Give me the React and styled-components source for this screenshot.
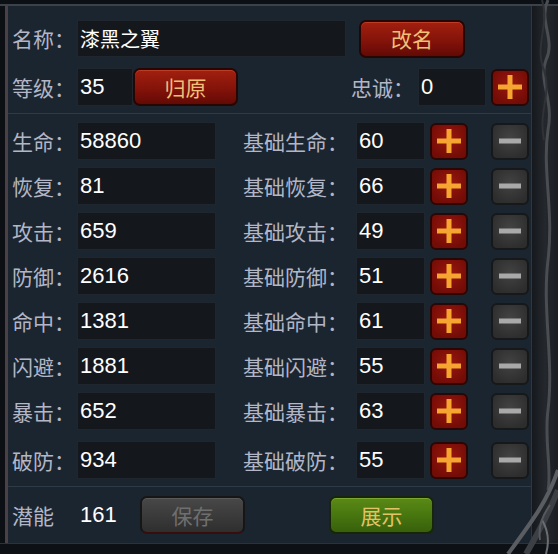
import React from 'react';
import styled, { createGlobalStyle } from 'styled-components';

const GlobalStyle = createGlobalStyle`
  html, body {
    margin: 0;
    padding: 0;
    background: #0f1419;
  }
  body {
    width: 558px;
    height: 554px;
    overflow: hidden;
  }
`;

const Frame = styled.div`
  position: relative;
  width: 558px;
  height: 554px;
  display: flex;
  flex-direction: column;
  background: #0f1419;
  font-family: "Noto Sans CJK SC", "Liberation Sans", sans-serif;
  overflow: hidden;
`;

const TopEdge = styled.div`
  height: 6px;
  box-sizing: border-box;
  background: #0c1014;
  border-bottom: 2px solid #3b424a;
`;

const Middle = styled.div`
  flex: 1;
  display: flex;
`;

const LeftEdge = styled.div`
  width: 8px;
  box-sizing: border-box;
  background: #0c1014;
  border-right: 3px solid #4a4046;
`;

const Panel = styled.div`
  flex: 1;
  display: flex;
  flex-direction: column;
  padding: 14px 0 8px 4px;
  background: #1b2530;
  border-right: 1px solid #2c3743;
`;

const RightEdge = styled.div`
  width: 26px;
  background: linear-gradient(90deg, #15191d, #24272b 50%, #1a1d21);
`;

const BottomEdge = styled.div`
  height: 11px;
  box-sizing: border-box;
  background: #0d1115;
  border-top: 1px solid #2a323b;
`;

const Row = styled.div`
  display: flex;
  align-items: center;
  height: ${(p) => p.$h || 38}px;
  margin-top: ${(p) => p.$mt || 0}px;
  margin-bottom: ${(p) => p.$mb || 0}px;
`;

const Label = styled.div`
  width: ${(p) => p.$w || 65}px;
  margin-left: ${(p) => p.$ml || 0}px;
  flex-shrink: 0;
  color: #b2b6c6;
  font-size: 21px;
  line-height: 1;
  white-space: nowrap;
`;

const ValueBox = styled.div`
  width: ${(p) => p.$w}px;
  height: 100%;
  flex-shrink: 0;
  box-sizing: border-box;
  display: flex;
  align-items: center;
  padding-left: 2px;
  background: #14181d;
  border: 1px solid #1f262e;
  color: #ffffff;
  font-family: ${(p) => (p.$cjk ? '"Noto Sans CJK SC", sans-serif' : '"Liberation Sans", Arial, sans-serif')};
  font-size: ${(p) => (p.$cjk ? 20 : 22)}px;
`;

const PlainValue = styled.div`
  width: ${(p) => p.$w}px;
  flex-shrink: 0;
  color: #ffffff;
  font-family: "Liberation Sans", Arial, sans-serif;
  font-size: 22px;
`;

const TextButton = styled.button`
  width: ${(p) => p.$w}px;
  height: 38px;
  margin-left: ${(p) => p.$ml || 0}px;
  flex-shrink: 0;
  box-sizing: border-box;
  padding: 0;
  border-radius: 7px;
  font-family: "Noto Sans CJK SC", sans-serif;
  font-size: 21px;
  line-height: 1;
  cursor: pointer;
  ${(p) =>
    p.$tone === 'green'
      ? `
    background: linear-gradient(180deg, #5a8a16 0%, #46740f 55%, #38600b 100%);
    border: 2px solid #17260a;
    color: #e4c266;
    box-shadow: inset 0 1px 0 rgba(200, 240, 120, 0.3);
  `
      : p.$tone === 'gray'
      ? `
    background: linear-gradient(180deg, #484848 0%, #3a3a3a 55%, #2e2e2e 100%);
    border: 2px solid #161616;
    border-bottom-color: #3a0d0d;
    color: #6f6f6f;
    box-shadow: inset 0 1px 0 rgba(255, 255, 255, 0.1);
  `
      : `
    background: linear-gradient(180deg, #a2200f 0%, #84130a 55%, #620a05 100%);
    border: 2px solid #250603;
    color: #f0c078;
    box-shadow: inset 0 1px 0 rgba(255, 130, 100, 0.3);
  `}
`;

const IconButton = styled.button`
  width: 38px;
  height: 37px;
  margin-left: ${(p) => p.$ml || 0}px;
  flex-shrink: 0;
  box-sizing: border-box;
  padding: 0;
  display: flex;
  align-items: center;
  justify-content: center;
  border-radius: 6px;
  cursor: pointer;
  ${(p) =>
    p.$minus
      ? `
    background: radial-gradient(circle at 50% 40%, #434343, #2d2d2d 80%);
    border: 2px solid #161819;
  `
      : `
    background: radial-gradient(circle at 50% 40%, #9a170e, #720c06 80%);
    border: 2px solid #2a0704;
  `}
`;

const Divider = styled.div`
  height: 1px;
  margin: ${(p) => p.$m};
  margin-left: -4px;
  background: #2e3a47;
`;

const StatList = styled.div`
  display: flex;
  flex-direction: column;
  gap: 7px;
`;

const Ornament = styled.svg`
  position: absolute;
  right: 0;
  top: 0;
  pointer-events: none;
`;

const Plus = () => (
  <svg width="26" height="26" viewBox="0 0 26 26">
    <rect x="1" y="10.5" width="24" height="5" fill="#f6a630" />
    <rect x="10.5" y="1" width="5" height="24" fill="#f6a630" />
  </svg>
);

const Minus = () => (
  <svg width="22" height="6" viewBox="0 0 22 6">
    <rect x="0" y="0.5" width="22" height="5" fill="#a9a9a9" />
  </svg>
);

const stats = [
  ['生命', '58860', '60'],
  ['恢复', '81', '66'],
  ['攻击', '659', '49'],
  ['防御', '2616', '51'],
  ['命中', '1381', '61'],
  ['闪避', '1881', '55'],
  ['暴击', '652', '63'],
  ['破防', '934', '55'],
];

export default function App() {
  return (
    <Frame>
      <GlobalStyle />
      <TopEdge />
      <Middle>
        <LeftEdge />
        <Panel>
          <Row $h={37} $mb={11}>
            <Label>名称：</Label>
            <ValueBox $w={269} $cjk>漆黑之翼</ValueBox>
            <TextButton $w={106} $ml={13}>改名</TextButton>
          </Row>
          <Row>
            <Label>等级：</Label>
            <ValueBox $w={56}>35</ValueBox>
            <TextButton $w={105}>归原</TextButton>
            <Label $ml={113} $w={67}>忠诚：</Label>
            <ValueBox $w={68}>0</ValueBox>
            <IconButton $ml={5}><Plus /></IconButton>
          </Row>
          <Divider $m="7px 0 8px" />
          <StatList>
            {stats.map(([name, value, base], i) => (
              <Row key={name} $mt={i === stats.length - 1 ? 4 : 0}>
                <Label>{name}：</Label>
                <ValueBox $w={139}>{value}</ValueBox>
                <Label $ml={27} $w={113}>基础{name}：</Label>
                <ValueBox $w={69}>{base}</ValueBox>
                <IconButton $ml={5}><Plus /></IconButton>
                <IconButton $ml={23} $minus><Minus /></IconButton>
              </Row>
            ))}
          </StatList>
          <Divider $m="7px 0 9px" />
          <Row>
            <Label $w={68}>潜能</Label>
            <PlainValue $w={60}>161</PlainValue>
            <TextButton $w={105} $tone="gray">保存</TextButton>
            <TextButton $w={105} $ml={84} $tone="green">展示</TextButton>
          </Row>
        </Panel>
        <RightEdge />
      </Middle>
      <BottomEdge />
      <Ornament width="60" height="554" viewBox="0 0 60 554">
        <path d="M50 0 C40 20, 58 40, 48 60 C40 80, 56 100, 50 130 C44 170, 56 210, 50 260 C44 310, 56 360, 50 410 C46 440, 54 470, 50 490" stroke="#4a4d52" strokeWidth="3" fill="none" />
        <path d="M44 0 C52 25, 36 45, 46 70 C54 95, 40 110, 46 140" stroke="#2f3236" strokeWidth="2" fill="none" />
        <path d="M60 470 C50 500, 35 520, 10 554" stroke="#5a5d62" strokeWidth="4" fill="none" />
        <path d="M60 490 C52 510, 42 530, 28 554" stroke="#3c3f44" strokeWidth="6" fill="none" />
        <path d="M44 520 C50 530, 52 540, 48 554" stroke="#6a6d72" strokeWidth="2" fill="none" />
        <path d="M52 505 C45 515, 40 525, 42 540" stroke="#55585d" strokeWidth="2" fill="none" />
      </Ornament>
    </Frame>
  );
}
